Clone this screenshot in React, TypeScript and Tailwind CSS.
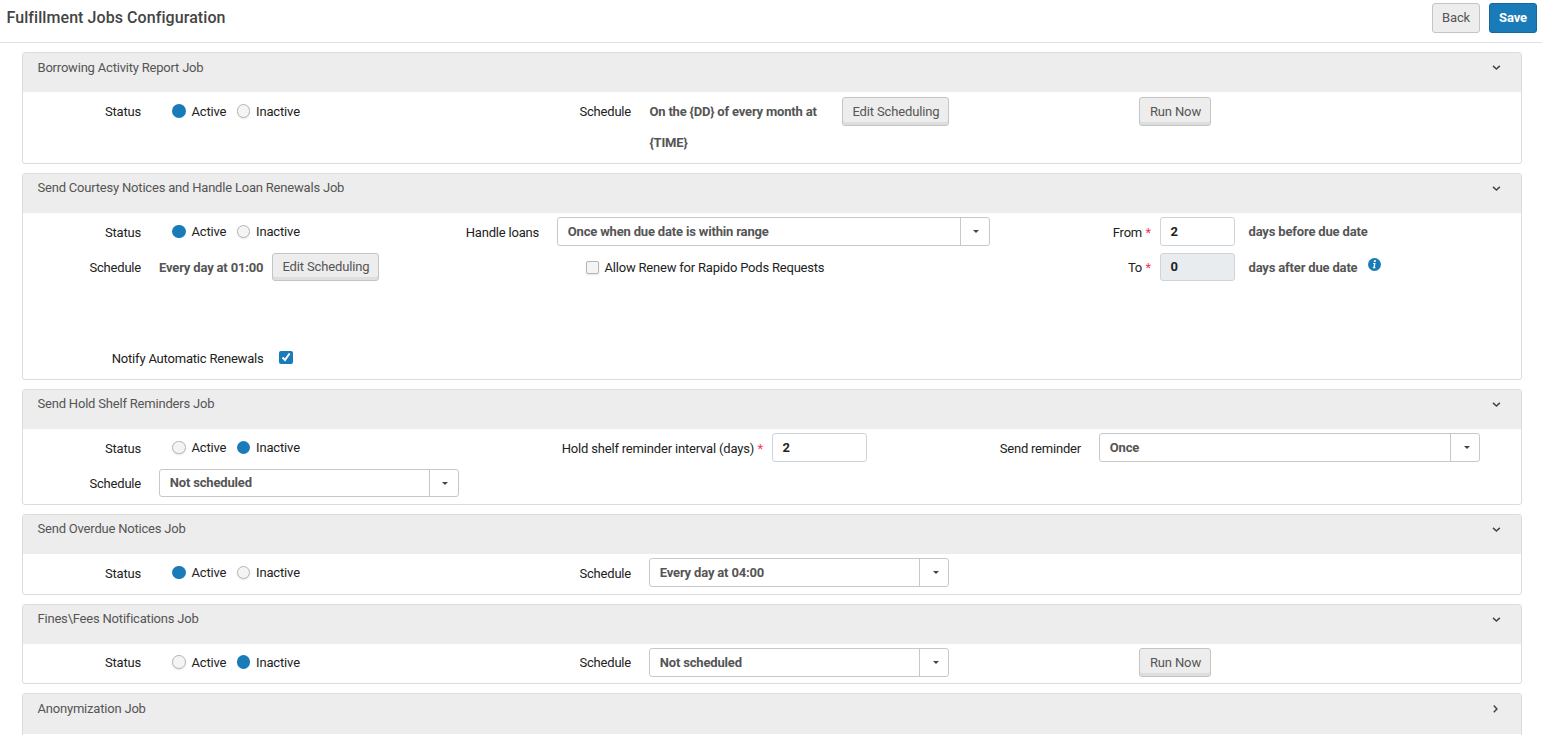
import type { ReactNode } from "react";

const Button = ({ children, className = "h-[29px] w-[107px]" }: { children: ReactNode; className?: string }) => (
  <button className={`shrink-0 rounded-[3px] border border-[#c4c4c4] bg-[#ededed] pl-px tracking-[-0.14px] text-[#555] shadow-[inset_0_-3px_0_#dedede] ${className}`}>
    {children}
  </button>
);

const Label = ({ children, className = "w-[118px]", required = false }: { children: ReactNode; className?: string; required?: boolean }) => (
  <span className={`shrink-0 whitespace-nowrap text-right text-[#222] ${className}`}>
    {children}
    {required && <span className="ml-[0.5px] text-[#f5365c]"> *</span>}
  </span>
);

const Dot = ({ on, className }: { on: boolean; className: string }) =>
  on ? (
    <span className={`rounded-full bg-[#1a7bb9] ${className}`} />
  ) : (
    <span className={`rounded-full border border-[#b5b5b5] bg-[#f4f4f4] shadow-[0_1px_2px_rgba(0,0,0,0.1)] ${className}`} />
  );

const Status = ({
  active,
  labelClass = "w-[118px] pt-[2px]",
  dotClass = "h-[13px]",
}: {
  active: boolean;
  labelClass?: string;
  dotClass?: string;
}) => (
  <>
    <Label className={labelClass}>Status</Label>
    <div className="ml-[31px] flex items-center text-[#222]">
      <Dot on={active} className={`w-[14px] ${dotClass}`} />
      <span className="ml-[5.5px] w-[45.5px]">Active</span>
      <Dot on={!active} className={`w-[13px] ${dotClass}`} />
      <span className="ml-[6px] tracking-[-0.15px]">Inactive</span>
    </div>
  </>
);

const Select = ({ value, className, arrow = "pl-[2px]" }: { value: string; className: string; arrow?: string }) => (
  <div className={`ml-[18px] flex h-full shrink-0 rounded-[3px] border border-[#c8c8c8] bg-white ${className}`}>
    <span className="flex flex-1 items-center pl-[9.75px] font-bold tracking-[-0.17px] text-[#555]">{value}</span>
    <span className={`flex w-[29px] items-center justify-center border-l border-[#c8c8c8] ${arrow}`}>
      <svg width="6" height="3" viewBox="0 0 6 3">
        <path d="M0 0h6L3 3z" fill="#444" />
      </svg>
    </span>
  </div>
);

const Input = ({ value, className }: { value: string; className: string }) => (
  <div className={`ml-[9px] flex h-full shrink-0 items-center rounded-[3px] border border-[#ced4da] pl-[9.5px] font-bold text-[#222] ${className}`}>
    {value}
  </div>
);

const Card = ({
  title,
  open = true,
  className,
  titleClass = "mt-[4px]",
  children,
}: {
  title: string;
  open?: boolean;
  className: string;
  titleClass?: string;
  children?: ReactNode;
}) => (
  <section className={`overflow-hidden rounded-[3px] border border-[#dcdcdc] bg-white ${className}`}>
    <div className={`flex justify-between bg-[#ededed] pl-[14.5px] pr-[20px] ${open ? "h-[39px]" : "h-[40px]"}`}>
      <h2 className={`h-5 leading-5 text-[#555] ${titleClass}`}>{title}</h2>
      <svg width="10" height="10" viewBox="0 0 10 10" className="mt-[10px]" fill="none" stroke="#444" strokeWidth="1.5">
        {open ? <path d="M2 2.9 5.4 6 8.8 2.9" /> : <path d="M2.8 1.6 5.9 4.9 2.8 8.2" />}
      </svg>
    </div>
    {children}
  </section>
);

const Row = ({ children, className }: { children: ReactNode; className: string }) => (
  <div className={`flex ${className}`}>{children}</div>
);

const Col = ({ children, className = "w-[490px]" }: { children?: ReactNode; className?: string }) => (
  <div className={`flex shrink-0 items-center ${className}`}>{children}</div>
);

const App = () => {
  return (
    <div className="h-[735px] w-full overflow-hidden bg-white font-['Roboto',sans-serif] text-[13px] leading-5 tracking-[-0.2px]">
      <header className="flex h-[43px] justify-between border-b border-[#e0e0e0] pl-[6.5px] pr-[5px] pt-[3px]">
        <h1 className="mt-[5px] text-[16px] font-medium leading-5 tracking-[0.07px] text-[#444]">Fulfillment Jobs Configuration</h1>
        <div className="flex gap-[9px] tracking-[-0.1px]">
          <button className="h-[30px] w-[48px] rounded-[3px] border border-[#c4c4c4] bg-[#ededed] text-[#555]">Back</button>
          <button className="h-[30px] w-[48px] rounded-[3px] border border-[#16679b] bg-[#1a7bb9] font-bold text-white">Save</button>
        </div>
      </header>

      <main className="flex flex-col gap-[9px] pl-[22px] pr-[20px] pt-[9px]">
        <Card title="Borrowing Activity Report Job" className="h-[112px]" titleClass="mt-[5px]">
          <Row className="mt-[5px] h-[29px]">
            <Col>
              <Status active labelClass="w-[118px]" dotClass="mb-px h-[14px]" />
            </Col>
            <Col>
              <Label>Schedule</Label>
              <p className="ml-[18.5px] h-[31px] w-[192.5px] pr-[20px] font-bold leading-[31px] tracking-[-0.19px] text-[#555]">
                On the {"{DD}"} of every month at {"{TIME}"}
              </p>
              <Button>Edit Scheduling</Button>
            </Col>
            <Col className="pl-[136px]">
              <Button className="h-[29px] w-[72px]">Run Now</Button>
            </Col>
          </Row>
        </Card>

        <Card title="Send Courtesy Notices and Handle Loan Renewals Job" className="h-[207px]">
          <Row className="mt-[4px] h-[29px]">
            <Col className="w-[398px]">
              <Status active />
            </Col>
            <Col className="w-[582px]">
              <Label className="w-[118px] pt-[2px]">Handle loans</Label>
              <Select value="Once when due date is within range" className="w-[433px]" />
            </Col>
            <Col>
              <Label className="w-[148px] pt-[2px]" required>From</Label>
              <Input value="2" className="w-[75px]" />
              <span className="ml-[13.5px] font-bold tracking-[-0.17px] text-[#555]">days before due date</span>
            </Col>
          </Row>
          <Row className="mt-[7px] h-[28px]">
            <Col className="w-[563px]">
              <Label className="w-[118px] pt-px">Schedule</Label>
              <span className="ml-[18px] w-[113px] pt-px font-bold tracking-[-0.17px] text-[#555]">Every day at 01:00</span>
              <Button className="h-[28px] w-[107px]">Edit Scheduling</Button>
            </Col>
            <Col className="w-[417px]">
              <span className="h-[13px] w-[13px] rounded-[2px] border border-[#b5b5b5] bg-[#f4f4f4] shadow-[0_1px_2px_rgba(0,0,0,0.1)]" />
              <span className="ml-[5.5px] pt-px text-[#222]">Allow Renew for Rapido Pods Requests</span>
            </Col>
            <Col>
              <Label className="w-[148px] pt-px" required>To</Label>
              <Input value="0" className="w-[75px] bg-[#e9ecef]" />
              <span className="ml-[13.5px] pt-px font-bold tracking-[-0.17px] text-[#555]">days after due date</span>
              <svg width="13" height="13" viewBox="0 0 13 13" className="mb-[5px] ml-[10.7px]">
                <circle cx="6.5" cy="6.5" r="6.5" fill="#1a7bb9" />
                <path d="M6 2.2h2L7.7 4h-2zM5.2 5h2.3L6.8 9.2h.8l-.2 1H4.7l.2-1h.5L6 6h-.9z" fill="#fff" />
              </svg>
            </Col>
          </Row>
          <Row className="mt-[67px] h-5">
            <Label className="w-[240.5px] pt-px">Notify Automatic Renewals</Label>
            <span className="ml-[15.5px] mt-[3px] h-[13px] w-[14px] rounded-[2px] bg-[#1a7bb9]">
              <svg width="14" height="13" viewBox="0 0 14 13" fill="none" stroke="#fff" strokeWidth="2">
                <path d="M3.5 6.5 6 9l4.6-6.5" />
              </svg>
            </span>
          </Row>
        </Card>

        <Card title="Send Hold Shelf Reminders Job" className="h-[116px]">
          <Row className="mt-[4px] h-[29px]">
            <Col>
              <Status active={false} />
            </Col>
            <Col className="w-[450px]">
              <Label className="w-[250px] pt-[2px] tracking-[-0.18px]" required>Hold shelf reminder interval (days)</Label>
              <Input value="2" className="w-[95px]" />
            </Col>
            <Col>
              <Label className="w-[118px] pt-[2px]">Send reminder</Label>
              <Select value="Once" className="w-[381px]" arrow="pl-[4px]" />
            </Col>
          </Row>
          <Row className="mt-[7px] h-[28px]">
            <Col>
              <Label className="w-[118px] pt-px">Schedule</Label>
              <Select value="Not scheduled" className="w-[300px]" />
            </Col>
          </Row>
        </Card>

        <Card title="Send Overdue Notices Job" className="h-[81px]">
          <Row className="mt-[4px] h-[29px]">
            <Col>
              <Status active />
            </Col>
            <Col>
              <Label className="w-[118px] pt-[2px]">Schedule</Label>
              <Select value="Every day at 04:00" className="w-[300px]" arrow="pl-[4px]" />
            </Col>
          </Row>
        </Card>

        <Card title="Fines\Fees Notifications Job" className="h-[80px]">
          <Row className="mt-[4px] h-[29px]">
            <Col>
              <Status active={false} labelClass="w-[118px]" dotClass="mb-px h-[14px]" />
            </Col>
            <Col>
              <Label>Schedule</Label>
              <Select value="Not scheduled" className="w-[300px]" arrow="pl-[4px]" />
            </Col>
            <Col className="pl-[136px]">
              <Button className="h-[29px] w-[72px]">Run Now</Button>
            </Col>
          </Row>
        </Card>

        <Card title="Anonymization Job" open={false} className="h-[60px]" titleClass="mt-[5px]" />
      </main>
    </div>
  );
};

export default App;
